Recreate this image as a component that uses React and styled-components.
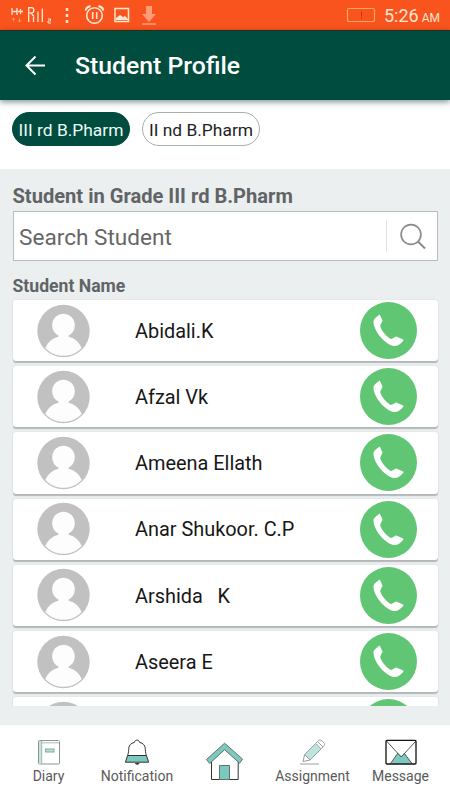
import styled, { createGlobalStyle, ThemeProvider } from 'styled-components'

const theme = {
  orange: '#fa541e',
  cream: '#ffe6cf',
  green: '#004d3f',
  call: '#61c673',
  mint: '#7ccabf',
  background: '#ebeff0',
  gray: '#616466',
  border: '#b9bcbd',
}

const GlobalStyle = createGlobalStyle`
  * {
    box-sizing: border-box;
  }

  body {
    margin: 0;
    font-family: Roboto, sans-serif;
    background-color: #fff;
  }
`

const Screen = styled.div`
  display: flex;
  flex-direction: column;
  width: 450px;
  height: 800px;
  overflow: hidden;
`

const StyledStatusBar = styled.div`
  display: flex;
  align-items: center;
  justify-content: space-between;
  flex: 0 0 30px;
  min-height: 0;
  height: 30px;
  padding-right: 10px;
  color: ${(props) => props.theme.cream};
  background-color: ${(props) => props.theme.orange};
`

const StatusGroup = styled.div`
  display: flex;
  align-items: center;
  height: 30px;
`

const Time = styled.div`
  display: flex;
  align-items: baseline;
  margin-left: 8px;
  padding-top: 3px;
  font-size: 18px;
  line-height: 24px;
  white-space: nowrap;
`

const Meridiem = styled.span`
  margin-left: 3px;
  font-size: 12px;
`

const StyledHeader = styled.header`
  display: flex;
  align-items: center;
  flex: 0 0 70px;
  gap: 30px;
  padding: 0 0 0 25px;
  background-color: ${(props) => props.theme.green};
  box-shadow: 0 2px 6px rgba(0, 40, 35, 0.5);
  border-top: 1px solid #24301d;
  z-index: 1;
`

const Title = styled.h1`
  margin: 0;
  padding-top: 1px;
  font-size: 24.8px;
  font-weight: 500;
  line-height: 30px;
  color: #fff;
  white-space: nowrap;
`

const Grades = styled.div`
  display: flex;
  align-items: flex-start;
  flex: 0 0 69px;
  gap: 12px;
  padding: 12px 12px 0;
`

const Grade = styled.button`
  width: 118px;
  height: 34px;
  padding: 1px 0 0;
  border: 1px solid ${(props) => (props.$active ? props.theme.green : '#a3b0ad')};
  border-radius: 17px;
  font-family: inherit;
  font-size: 17.4px;
  line-height: 30px;
  white-space: nowrap;
  color: ${(props) => (props.$active ? '#eefaf5' : '#222')};
  background-color: ${(props) => (props.$active ? props.theme.green : '#fff')};
`

const Content = styled.main`
  display: flex;
  flex-direction: column;
  flex: 0 0 556px;
  height: 556px;
  min-height: 0;
  padding: 15px 12.5px 19px;
  color: ${(props) => props.theme.gray};
  background-color: ${(props) => props.theme.background};
`

const Heading = styled.h2`
  flex: 0 0 27px;
  margin: 0;
  font-size: 20.1px;
  font-weight: 700;
  line-height: 24px;
  white-space: nowrap;
`

const SearchBox = styled.div`
  display: flex;
  align-items: center;
  flex: 0 0 50px;
  padding-left: 5.5px;
  border: 1px solid ${(props) => props.theme.border};
  background-color: #fff;
`

const SearchInput = styled.input`
  flex: 1;
  min-width: 0;
  padding: 2px 0 0;
  border: 0;
  outline: 0;
  font-family: inherit;
  font-size: 22.6px;
  background: none;

  &::placeholder {
    color: #666;
    opacity: 1;
  }
`

const SearchButton = styled.div`
  display: flex;
  align-items: center;
  width: 51px;
  height: 32px;
  padding-left: 12px;
  border-left: 1px solid #e2e4e4;
`

const ListTitle = styled.h3`
  flex: 0 0 37px;
  margin: 0;
  padding-top: 14px;
  font-size: 17.6px;
  font-weight: 700;
  line-height: 23px;
`

const List = styled.div`
  display: flex;
  flex-direction: column;
  flex: 1 1 0;
  gap: 5px;
  min-height: 0;
  margin: 0 -2px;
  padding: 2px 2px 0;
  overflow: hidden;
`

const Card = styled.div`
  display: flex;
  align-items: center;
  flex: 0 0 61.2px;
  padding: 0 20.5px 0 24.5px;
  border-radius: 3px;
  background-color: #fff;
  box-shadow: 0 1.5px 1px #b4b7b8, 0 0 2px rgba(0, 0, 0, 0.1);
`

const Name = styled.span`
  flex: 1;
  padding: 2.5px 0 0 45px;
  font-size: 19.9px;
  line-height: 26px;
  color: #171717;
  white-space: pre;
`

const CallButton = styled.div`
  display: flex;
  width: 57px;
  height: 57px;
  border-radius: 50%;
  background-color: ${(props) => props.theme.call};
`

const StyledNav = styled.nav`
  display: grid;
  grid-template-columns: 97px 80px 95px 81px 95px;
  flex: 0 0 75px;
  background-color: #fff;
`

const NavItem = styled.div`
  display: flex;
  flex-direction: column;
  align-items: center;
  padding-top: ${(props) => (props.$home ? '16px' : '14px')};
`

const NavLabel = styled.span`
  margin-top: 1px;
  font-size: 14px;
  line-height: 20px;
  color: #5a5a5a;
  white-space: nowrap;
`

const students = ['Abidali.K', 'Afzal Vk', 'Ameena Ellath', 'Anar Shukoor. C.P', 'Arshida   K', 'Aseera E', '']

function StatusIcons() {
  return (
    <svg width="165" height="30" viewBox="0 0 165 30" fill="none" stroke="#ffe6cf">
      <path d="M12 8v7M17 8v7M12 11.5h5M18 11.5h5M20.5 9v5" strokeWidth="1.3" />
      <path d="M13.5 22v-4M11.8 20l1.7-2 1.7 2M19.5 18v4M17.8 20l1.7 2 1.7-2" opacity=".35" />
      <path d="M28.7 22V7.7h2.6a2.6 2.6 0 0 1 0 5.2h-2.6M31 13l3 3.5M33.5 22v-5M38 22V11.5M42.3 22V8.5" strokeWidth="1.3" />
      <path d="M48 19h2.5v2H48v2h3" strokeWidth="1" />
      <path d="M67 8v3M67 14v3M67 20v3" strokeWidth="2.5" />
      <circle cx="94.5" cy="15.5" r="7.8" strokeWidth="1.6" />
      <path d="M92.7 12v7M96.7 12v7" strokeWidth="1.6" />
      <path d="M86 10.5q-.5-3 4.5-4.5M103 10.5q.5-3-4.5-4.5" strokeWidth="2.3" />
      <rect x="115" y="8.5" width="13.5" height="13" strokeWidth="1.5" />
      <path d="M116 20v-2l4-3 3 2 2-1 3 3v1z" fill="#ffe6cf" stroke="none" />
      <path d="M146 6h6v8h4l-7 8-7-8h4zM142 23.3h14v1.5h-14z" fill="#ff9d79" stroke="none" />
    </svg>
  )
}

function BatteryIcon() {
  return (
    <svg width="30" height="30" viewBox="0 0 30 30" fill="none">
      <path d="M2.5 8.5H27q1.5 0 1.5 1.5v10q0 1.5-1.5 1.5H2.5q-1 0-1-1.5V10q0-1.5 1-1.5z" stroke="#f7a866" strokeWidth="1.2" />
      <path d="M15.5 11.5v5M15.5 17.5V19" stroke="#c92f11" />
    </svg>
  )
}

function BackIcon() {
  return (
    <svg width="20" height="20" viewBox="0 0 20 20" fill="none" stroke="#fff" strokeWidth="2">
      <path d="M20 9.5H1.5M10.5.5l-9 9 9 9" />
    </svg>
  )
}

function SearchIcon() {
  return (
    <svg width="27" height="27" viewBox="0 0 27 27" fill="none" stroke="#8b8b8b" strokeWidth="1.7">
      <circle cx="12" cy="11.5" r="9.9" />
      <path d="M19 18.5l7 7" strokeWidth="2" />
    </svg>
  )
}

function Avatar() {
  return (
    <svg width="53" height="54" viewBox="0 0 53 54">
      <circle cx="26.5" cy="27" r="26.2" fill="#c1c1c1" />
      <path
        d="M26.5 9.8C20 9.8 15.2 14.8 15.2 21.2c0 4.5 2.5 8.7 6.2 10.2v1.3C15.2 34.3 10.8 38.2 8.3 44c4.7 5 11 7.8 18.2 7.8S40 49 44.7 44c-2.5-5.8-6.9-9.7-13.1-11.3v-1.3c3.7-1.5 6.2-5.7 6.2-10.2 0-6.4-4.8-11.4-11.3-11.4z"
        fill="#fdfdfd"
      />
    </svg>
  )
}

function PhoneIcon() {
  return (
    <svg width="57" height="57" viewBox="0 0 57 57" fill="#fff">
      <path d="M19 12.9c.4-.3.9-.2 1.1.3l2.3 5c.2.5.1.9-.2 1.3l-1.7 3.2c-.4.8-.3 1.6 0 2.6 1.8 4.3 5 8.3 9 11 1 .7 1.8.8 2.9.1l3.1-1.7c.5-.3.9-.3 1.4 0l6.2 2.8c.5.3.6.7.2 1.2-2.3 3-5.3 5.3-8.8 5.3-2.8 0-6.3-1.8-9.7-4.7-6.1-5.2-11.8-14-11.3-20.6.3-2.2 3.5-4.3 5.5-5.8z" />
    </svg>
  )
}

function DiaryIcon() {
  return (
    <svg width="24" height="26" viewBox="0 0 24 26" fill="none">
      <rect x="1.5" y="1.5" width="21" height="23.5" rx="1" stroke="#8b9491" />
      <path d="M2 2h2.7v22.5H2z" fill="#c4e6df" />
      <path d="M4.7 1.5V25M5 3.8h17" stroke="#8fa8a3" strokeWidth=".8" />
      <rect x="8.5" y="10" width="8.5" height="3" fill="#b9dfd8" stroke="#82aaa2" />
    </svg>
  )
}

function BellIcon() {
  return (
    <svg width="26" height="26" viewBox="0 0 26 26" fill="none" stroke="#333">
      <path d="M3.6 16.5h18.8l2.2 6.7H1.4z" fill="#7ccabf" />
      <path d="M3.6 16.5C6 11 2.3 5.5 10.5 3.3 11 .3 15 .3 15.5 3.3c8.2 2.2 4.5 7.7 6.9 13.2" />
      <path d="M11 24h4.5c-.5 2.3-4 2.3-4.5 0z" fill="#333" stroke="none" />
    </svg>
  )
}

function HomeIcon() {
  return (
    <svg width="39" height="40" viewBox="0 0 39 40" fill="none">
      <path d="M6.5 19v19.5h26.7V19" stroke="#333" />
      <path d="M19.6 2.2L1.5 18.5l3.2 4L19.6 8.7l15 13.5 3-4z" fill="#7ccabf" stroke="#61716d" />
      <path d="M14.5 38.5v-14h10v14z" fill="#7ccabf" stroke="#61716d" />
    </svg>
  )
}

function PencilIcon() {
  return (
    <svg width="26" height="26" viewBox="0 0 26 26" fill="none" stroke="#9a9e9d">
      <path d="M4.6 15.5L15.7 4.4l5.5 5.5L10 21z" fill="#bce6dd" />
      <path d="M4.6 15.5L3 22.6 10 21M15.7 4.4l2.6-2.6c1-1 2.6-1 3.6 0l1.9 1.9c1 1 1 2.6 0 3.6l-2.6 2.6M17.6 2.6l5.4 5.4" />
      <path d="M0 25h19" />
    </svg>
  )
}

function MessageIcon() {
  return (
    <svg width="32" height="26" viewBox="0 0 32 26" fill="none" stroke="#555">
      <path d="M6 24.5L13 14l3.2 3 3-3L27 24.5z" fill="#7ccabf" stroke="none" />
      <path d="M1.5 2l14.7 16L31 2M5.5 24.5L13 14M27 24.5L19 14" />
      <rect x="1" y="1.3" width="30" height="23.7" rx="1" stroke="#111" strokeWidth="1.3" />
    </svg>
  )
}

const navItems = [
  { label: 'Diary', icon: DiaryIcon },
  { label: 'Notification', icon: BellIcon },
  { icon: HomeIcon, home: true },
  { label: 'Assignment', icon: PencilIcon },
  { label: 'Message', icon: MessageIcon },
]

function StatusBar() {
  return (
    <StyledStatusBar>
      <StatusIcons />
      <StatusGroup>
        <BatteryIcon />
        <Time>
          5:26<Meridiem>AM</Meridiem>
        </Time>
      </StatusGroup>
    </StyledStatusBar>
  )
}

function StudentCard({ name }) {
  return (
    <Card>
      <Avatar />
      <Name>{name}</Name>
      <CallButton>
        <PhoneIcon />
      </CallButton>
    </Card>
  )
}

function App() {
  return (
    <ThemeProvider theme={theme}>
      <GlobalStyle />
      <Screen>
        <StatusBar />
        <StyledHeader>
          <BackIcon />
          <Title>Student Profile</Title>
        </StyledHeader>
        <Grades>
          <Grade $active>III rd B.Pharm</Grade>
          <Grade>II nd B.Pharm</Grade>
        </Grades>
        <Content>
          <Heading>Student in Grade III rd B.Pharm</Heading>
          <SearchBox>
            <SearchInput placeholder="Search Student" />
            <SearchButton>
              <SearchIcon />
            </SearchButton>
          </SearchBox>
          <ListTitle>Student Name</ListTitle>
          <List>
            {students.map((name) => (
              <StudentCard key={name} name={name} />
            ))}
          </List>
        </Content>
        <StyledNav>
          {navItems.map(({ label, icon: Icon, home }) => (
            <NavItem key={label || 'home'} $home={home}>
              <Icon />
              {label && <NavLabel>{label}</NavLabel>}
            </NavItem>
          ))}
        </StyledNav>
      </Screen>
    </ThemeProvider>
  )
}

export default App
